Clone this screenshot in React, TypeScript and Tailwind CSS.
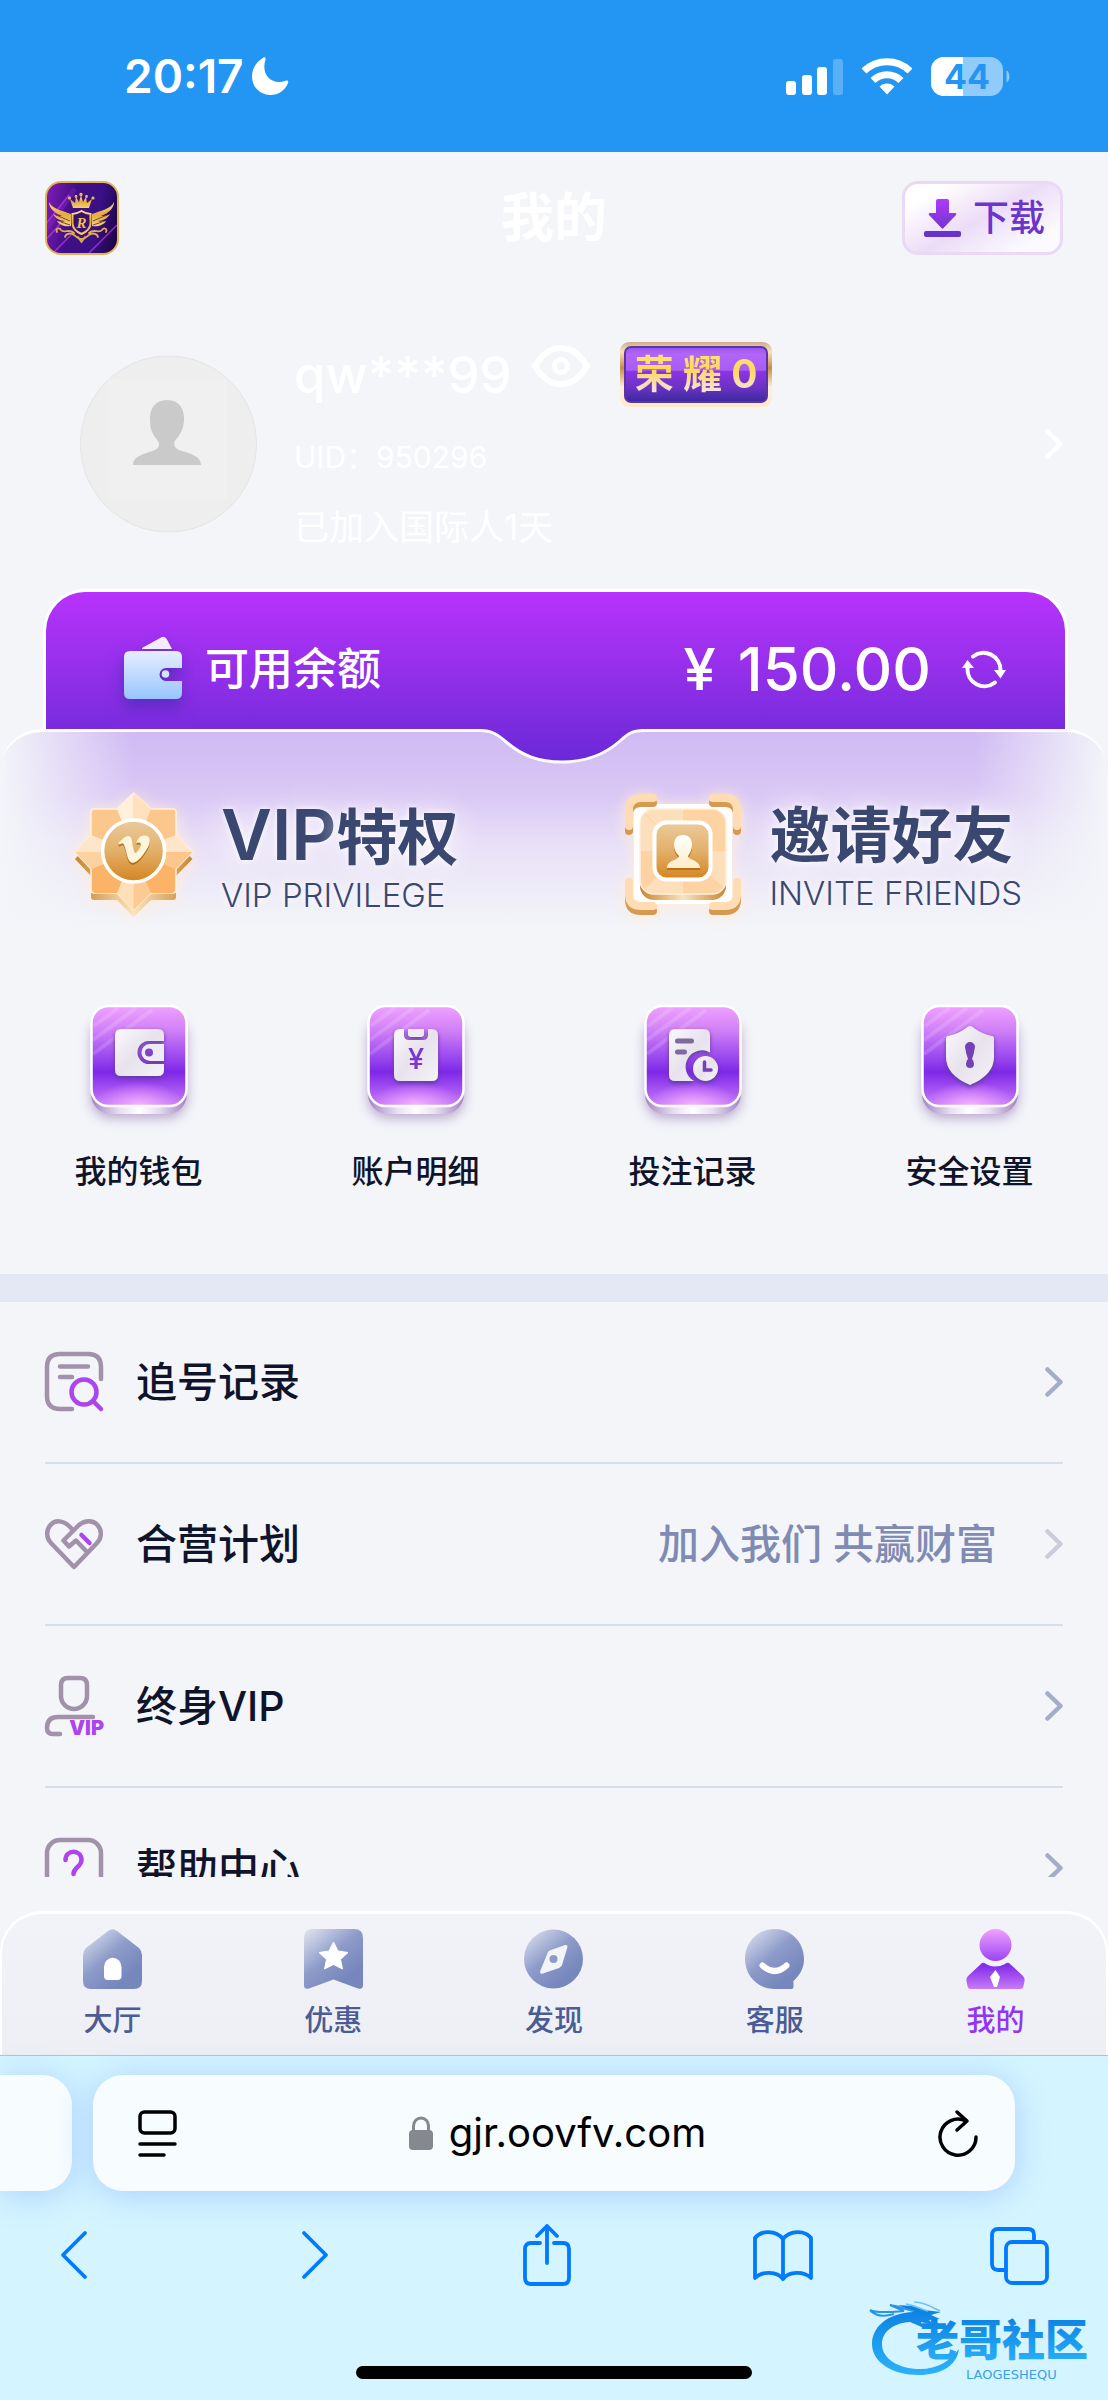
import type { ReactNode } from 'react';
import { FaVimeoV } from 'react-icons/fa';

const QUICK_LINKS = [
  { label: '我的钱包', glyph: <WalletGlyph /> },
  { label: '账户明细', glyph: <BillGlyph /> },
  { label: '投注记录', glyph: <HistoryGlyph /> },
  { label: '安全设置', glyph: <ShieldGlyph /> },
];

const MENU = [
  { label: '追号记录', icon: <TraceIcon /> },
  { label: '合营计划', icon: <PartnerIcon />, note: '加入我们 共赢财富' },
  { label: '终身VIP', icon: <LifeVipIcon /> },
  { label: '帮助中心', icon: <HelpIcon /> },
];

const TABS = [
  { label: '大厅', icon: <HallIcon /> },
  { label: '优惠', icon: <PromoIcon /> },
  { label: '发现', icon: <DiscoverIcon /> },
  { label: '客服', icon: <ServiceIcon /> },
  { label: '我的', icon: <MineIcon />, active: true },
];

// Gradients shared by several icons
function SharedDefs() {
  return (
    <svg width="0" height="0" className="absolute" aria-hidden="true">
      <defs>
        <linearGradient id="gold" x1="0" y1="0" x2="0" y2="1">
          <stop offset="0" stopColor="#fbe08a" />
          <stop offset="0.5" stopColor="#e5ab3c" />
          <stop offset="1" stopColor="#f4cf73" />
        </linearGradient>
        <linearGradient id="bronze" x1="0" y1="0" x2="0" y2="1">
          <stop offset="0" stopColor="#ebcb9d" />
          <stop offset="0.5" stopColor="#e2b069" />
          <stop offset="1" stopColor="#d5831f" />
        </linearGradient>
        <linearGradient id="goldEdge" x1="0" y1="0" x2="1" y2="0">
          <stop offset="0" stopColor="#c98431" />
          <stop offset="0.5" stopColor="#fbe3bd" />
          <stop offset="1" stopColor="#c98431" />
        </linearGradient>
        <linearGradient id="cream" x1="0" y1="0" x2="0" y2="1">
          <stop offset="0" stopColor="#ffffff" />
          <stop offset="1" stopColor="#ffedc8" />
        </linearGradient>
        <linearGradient id="tile" x1="0" y1="0" x2="0" y2="1">
          <stop offset="0" stopColor="#f0a2ff" />
          <stop offset="0.25" stopColor="#cf7ff7" />
          <stop offset="0.55" stopColor="#9340ee" />
          <stop offset="0.66" stopColor="#7d28e6" />
          <stop offset="0.85" stopColor="#a956f3" />
          <stop offset="1" stopColor="#c47cf8" />
        </linearGradient>
        <radialGradient id="tileGlow" cx="0.5" cy="1" r="0.5">
          <stop offset="0" stopColor="#f7b4ff" />
          <stop offset="1" stopColor="#f0a2ff" stopOpacity="0" />
        </radialGradient>
        <linearGradient id="tileBase" x1="0" y1="0" x2="1" y2="0">
          <stop offset="0" stopColor="#a183c4" />
          <stop offset="0.3" stopColor="#e9def2" />
          <stop offset="0.5" stopColor="#ffffff" />
          <stop offset="0.7" stopColor="#e9def2" />
          <stop offset="1" stopColor="#a183c4" />
        </linearGradient>
        <linearGradient id="paper" x1="0" y1="0" x2="1" y2="1">
          <stop offset="0" stopColor="#faf8fc" />
          <stop offset="0.5" stopColor="#e7e2ec" />
          <stop offset="1" stopColor="#f5f2f8" />
        </linearGradient>
        <linearGradient id="tab" x1="0.1" y1="0" x2="0.75" y2="0.8">
          <stop offset="0" stopColor="#dadeed" />
          <stop offset="0.55" stopColor="#8d9bc9" />
          <stop offset="1" stopColor="#7687bd" />
        </linearGradient>
        <linearGradient id="tabHead" x1="0" y1="0" x2="0" y2="1">
          <stop offset="0" stopColor="#f0a2ff" />
          <stop offset="1" stopColor="#9a45f0" />
        </linearGradient>
        <linearGradient id="tabBody" x1="0" y1="0" x2="0" y2="1">
          <stop offset="0.15" stopColor="#8630ea" />
          <stop offset="1" stopColor="#c77af9" />
        </linearGradient>
      </defs>
    </svg>
  );
}

function StatusBar() {
  return (
    <div className="flex h-[152px] shrink-0 items-center justify-between bg-[#2396f4] pr-[97px] pl-[124px] text-white">
      <div className="flex items-center gap-2">
        <span className="text-[46px] leading-none font-semibold">20:17</span>
        <svg width="37" height="38" viewBox="0 0 37 38" fill="currentColor">
          <path d="M11.500 0.500C4 5 0 12 0 19.500 0 30 8 38 18.500 38c8 0 14.500-4.500 17.500-12 .8-2-.6-3-2.500-2.200C20 28.500 8.500 18.500 13.500 2.500c.5-1.800-.5-2.800-2-2z" />
        </svg>
      </div>
      <div className="flex items-center gap-[19px]">
        <svg width="57" height="37" viewBox="0 0 57 37" fill="currentColor">
          <rect x="0" y="23" width="10" height="14" rx="3" />
          <rect x="16" y="17" width="10" height="20" rx="3" />
          <rect x="31" y="9" width="10" height="28" rx="3" />
          <rect x="47" y="1" width="10" height="36" rx="3" opacity="0.25" />
        </svg>
        <svg width="50" height="38" viewBox="0 0 50 38" fill="none" stroke="currentColor" strokeWidth="7">
          <path d="M2 14A33 33 0 0 1 48 14" />
          <path d="M11 23.500A20 20 0 0 1 39 23.500" />
          <path d="M25 37.500l-7.500-8a10.600 10.600 0 0 1 15 0z" fill="currentColor" stroke="none" />
        </svg>
        <svg width="80" height="39" viewBox="0 0 80 39" className="overflow-visible" role="img" aria-label="44%">
          <clipPath id="cell">
            <rect width="72" height="39" rx="13" />
          </clipPath>
          <g clipPath="url(#cell)">
            <rect width="72" height="39" fill="#fff" fillOpacity="0.5" />
            <rect width="32" height="39" fill="#fff" />
          </g>
          <path d="M75.500 13.500c4 2 4 10 0 12z" fill="#fff" fillOpacity="0.5" />
          <text x="36" y="32" textAnchor="middle" fontSize="34" fontWeight="700" fill="#2396f4">44</text>
        </svg>
      </div>
    </div>
  );
}

function AppLogo() {
  return (
    <svg width="74" height="74" viewBox="0 0 74 74">
      <defs>
        <linearGradient id="logoBg" x1="0" y1="0.4" x2="1" y2="0.6">
          <stop offset="0" stopColor="#7a1bb0" />
          <stop offset="0.35" stopColor="#3f0f86" />
          <stop offset="0.7" stopColor="#391085" />
          <stop offset="1" stopColor="#1e0546" />
        </linearGradient>
        <clipPath id="logoClip">
          <rect x="1" y="1" width="72" height="72" rx="15" />
        </clipPath>
      </defs>
      <g clipPath="url(#logoClip)">
        <rect width="74" height="74" fill="url(#logoBg)" />
        <path d="M0 44L24 14M-2 62L16 42M44 72L72 44M8 72L26 54" stroke="#c53df0" strokeWidth="1.500" opacity="0.7" />
        <path d="M0 50L30 8" stroke="#b22bea" strokeWidth="5" opacity="0.25" />
      </g>
      <rect x="1" y="1" width="72" height="72" rx="15" fill="none" stroke="#e3b356" strokeWidth="2" />
      <g fill="url(#gold)">
        <path d="M28 27l-3-9 5 4 1-6 3 5 2-7 2 7 3-5 1 6 5-4-3 9z" />
        <circle cx="24.500" cy="17" r="1.600" />
        <circle cx="31" cy="15.500" r="1.400" />
        <circle cx="36" cy="13.500" r="1.700" />
        <circle cx="41.500" cy="15.500" r="1.400" />
        <circle cx="48" cy="17" r="1.600" />
        <path d="M4 21c3 7 14 9 22 12v12c-6 1-12-1-14-5 3 1 6 1 8 0-5 0-10-3-12-7 3 2 7 2 9 2C9 32 4 27 4 21z" />
        <path d="M69 21c-3 7-14 9-22 12v12c6 1 12-1 14-5-3 1-6 1-8 0 5 0 10-3 12-7-3 2-7 2-9 2 8-3 13-8 13-14z" />
      </g>
      <path d="M11 34l14 6M16 41l9 3M62 34l-14 6M57 41l-9 3" stroke="#5a2a3c" strokeWidth="0.800" />
      <path d="M27.500 33q4 0 9-3 5 3 9 3v9q0 7-9 11-9-4-9-11z" fill="#3a0f6d" stroke="url(#gold)" strokeWidth="2" />
      <text x="36.500" y="47" textAnchor="middle" fontSize="15" fontStyle="italic" fontWeight="700" fill="#edc05c" className="font-['Liberation_Serif',serif]">R</text>
      <g fill="none" stroke="#e0ad4b" strokeWidth="1.800" strokeLinecap="round">
        <path d="M12 51c-2-3 2-5 4-2 3 4 8-2 13 3M20 56c1-4 6-4 9-2s4 4 7 4M61 51c2-3-2-5-4-2-3 4-8-2-13 3M53 56c-1-4-6-4-9-2s-4 4-7 4" />
        <path d="M33 56l3.500 5 3.500-5" />
      </g>
    </svg>
  );
}

function PageHeader() {
  return (
    <header className="grid grid-cols-[1fr_auto_1fr] items-center px-[45px] pt-[29px]">
      <a href="#home" aria-label="首页" className="justify-self-start">
        <AppLogo />
      </a>
      <h1 className="text-[53px] leading-none font-bold text-white">我的</h1>
      <button className="flex h-[74px] items-center gap-3 justify-self-end rounded-[16px] border-[3px] border-[#e9d8f6] bg-[linear-gradient(150deg,#ffffff_15%,#ecdcf7_50%,#fbfbff_85%)] pr-[15px] pl-[19px] text-[#6b35cc]">
        <svg width="37" height="38" viewBox="0 0 37 38">
          <defs>
            <linearGradient id="dl" x1="0" y1="0" x2="0" y2="1">
              <stop offset="0" stopColor="#ad3cf8" />
              <stop offset="1" stopColor="#6f35d0" />
            </linearGradient>
          </defs>
          <path d="M14 0h9q2 0 2 2v12h6q2 0 1 2L19.500 29q-1 1.500-2 0L5 16q-1-2 1-2h6V2q0-2 2-2z" fill="url(#dl)" />
          <rect x="0" y="32" width="37" height="6" rx="2" fill="#6634c8" />
        </svg>
        <span className="text-[36px] leading-none font-medium">下载</span>
      </button>
    </header>
  );
}

function Profile() {
  return (
    <section className="mt-[86px] flex items-center pr-[45px] pl-[80px] text-white">
      <svg width="177" height="178" viewBox="0 0 177 178" className="shrink-0">
        <circle cx="88.500" cy="89" r="88" fill="#eeeeee" stroke="#e4e4e4" />
        <rect x="28" y="24" width="119" height="120" fill="#f0f0f0" />
        <path d="M87 45c12 0 18 9 17 21-1 10-5 15-9 20-2 4 0 7 4 9 12 4 22 6 22 15H53c0-9 11-11 22-15 4-2 5-5 3-9-4-5-8-10-8-20-1-12 5-21 17-21z" fill="#cacaca" />
      </svg>
      <div className="ml-[37px] flex-1">
        <div className="flex h-[66px] items-center">
          <span className="text-[51px] leading-none font-medium">qw***99</span>
          <button aria-label="隐藏" className="mb-4 ml-5">
            <svg width="58" height="42" viewBox="0 0 58 42" fill="none" stroke="currentColor" strokeWidth="6">
              <path d="M3 21C10 9 18 3 29 3s19 6 26 18c-7 12-15 18-26 18S10 33 3 21z" />
              <circle cx="29" cy="21" r="6.500" strokeWidth="5" />
            </svg>
          </button>
          <span className="ml-[30px] rounded-[9px] bg-[linear-gradient(180deg,#cdb08a,#f6e0bd_15%,#c78f45_40%,#fdf0dc_70%,#ffe9c6)] p-1">
            <span className="flex h-[57px] items-center rounded-[7px] border-2 border-[#5a35a8] bg-[linear-gradient(180deg,#9a55ec,#b365fa_12%,#a85cf4_42%,#8b35e2_44%,#6b32c4_75%,#3b2a9e)] px-[9px]">
              <span className="bg-[linear-gradient(180deg,#ffe97a,#ffd75a_40%,#f3e3d8_85%)] bg-clip-text text-[39px] leading-[48px] font-bold whitespace-nowrap text-transparent">荣 耀 0</span>
            </span>
          </span>
        </div>
        <p className="mt-[30px] text-[30px] leading-10">UID：950296</p>
        <p className="mt-[30px] text-[35px] leading-10">已加入国际人1天</p>
      </div>
      <Chevron className="text-white" />
    </section>
  );
}

function Chevron({ className }: { className: string }) {
  return (
    <svg width="18" height="30" viewBox="0 0 18 30" className={className} fill="none" stroke="currentColor" strokeWidth="4.500" strokeLinecap="round" strokeLinejoin="round">
      <path d="M2.500 2.500L15.500 15 2.500 27.500" />
    </svg>
  );
}

function BalanceCard() {
  return (
    <section className="mt-[42px] mr-[40px] ml-[43px] flex h-[140px] items-center justify-between rounded-t-[42px] border-[3px] border-b-0 border-white bg-linear-to-b from-[#b832fb] to-[#792bde] pt-4 pr-[58px] pl-[77px] text-white">
      <div className="flex items-center gap-[22px]">
        <svg width="60" height="66" viewBox="0 0 60 66" className="drop-shadow-[0_8px_8px_#5a2bc0]">
          <defs>
            <linearGradient id="purse" x1="0" y1="0" x2="0" y2="1">
              <stop offset="0" stopColor="#e6eeff" />
              <stop offset="1" stopColor="#98c5ff" />
            </linearGradient>
          </defs>
          <path d="M19 12L38 1.500q4-2 6 2L49 13H19z" fill="#f3ecff" />
          <path d="M7 15h46q6 0 6 6v11H43a6.500 6.500 0 0 0 0 13h16v12q0 6-6 6H7q-6 0-6-6V21q0-6 6-6z" fill="url(#purse)" />
          <circle cx="42.500" cy="38" r="3.800" fill="#d4e4ff" />
        </svg>
        <span className="text-[44px] leading-none font-medium">可用余额</span>
      </div>
      <div className="flex items-center">
        <span className="text-[58px] leading-none font-medium">¥</span>
        <span className="ml-[22px] text-[60px] leading-none font-medium">150.00</span>
        <button aria-label="刷新" className="ml-[30px]">
          <svg width="46" height="40" viewBox="0 0 46 40" fill="none" stroke="currentColor" strokeWidth="4" strokeLinecap="round">
            <path d="M12 7.500A17 17 0 0 1 39.500 21" />
            <path d="M34 33.500A17 17 0 0 1 6.500 19" />
            <path d="M33 21h12l-5.500 8.500zM1 19h12L6.500 11z" fill="currentColor" stroke="none" />
          </svg>
        </button>
      </div>
    </section>
  );
}

function VipBadge() {
  const star =
    'M58.600 1L76 17h22q3 0 3 3v23l16.500 17L101 77v21q0 3-3 3H76l-17.400 17L42 101H19q-3 0-3-3V77L0 60l16-17V20q0-3 3-3h23z';
  return (
    <svg width="120" height="126" viewBox="0 0 120 126" className="shrink-0 overflow-visible drop-shadow-[0_2px_8px_#ffeeda]">
      <path d={star} fill="url(#goldEdge)" transform="translate(0 7)" />
      <path d={star} fill="#fcc78c" stroke="#fff1df" strokeWidth="1.500" />
      <g>
        <path d="M58.600 1L76 17 58.600 59z" fill="#ffe2bd" />
        <path d="M58.600 1L42 17l16.600 42z" fill="#fff0da" />
        <path d="M101 43l16.500 17H58.600z" fill="#ffe6cb" />
        <path d="M101 77l16.500-17H58.600z" fill="#fdc68b" />
        <path d="M16 43L0 60h58.600z" fill="#ffe6cb" />
        <path d="M16 77L0 60h58.600z" fill="#fdd2a1" />
        <path d="M58.600 118L76 101 58.600 59z" fill="#fdc994" />
        <path d="M58.600 118L42 101l16.600-42z" fill="#ffdfb8" />
        <path d="M17 98V77l41.600-17L42 101H19z" fill="#fbb368" />
        <path d="M100 98V77L58.600 60 76 101h22z" fill="#fbb368" />
      </g>
      <circle cx="58.600" cy="59" r="31" fill="url(#bronze)" stroke="#fff" strokeWidth="3.500" />
      <FaVimeoV x="41" y="41" size={36} color="#b5701a" />
      <FaVimeoV x="41" y="39" size={36} color="#fff4dc" />
    </svg>
  );
}

function InviteBadge() {
  const brackets = 'M6 34V18Q6 6 18 6h12M90 6h12q12 0 12 12v16M6 90v12q0 12 12 12h12M90 114h12q12 0 12-12V90';
  return (
    <svg width="120" height="126" viewBox="0 0 120 126" className="shrink-0 overflow-visible drop-shadow-[0_2px_8px_#ffeeda]">
      <rect x="11" y="12" width="98" height="100" rx="6" fill="#fff" />
      <g fill="none" strokeWidth="8" strokeLinecap="round">
        <path d={brackets} stroke="#d59a50" transform="translate(0 5)" />
        <path d={brackets} stroke="#ffdcb4" />
      </g>
      <rect x="17" y="22" width="86" height="86" rx="14" fill="url(#goldEdge)" />
      <rect x="17" y="17" width="86" height="85" rx="14" fill="#fdd3a3" stroke="#fff1df" strokeWidth="1.500" />
      <path d="M60 59V17H31q-6 0-9 4zM60 59h42V87q0 5-2 8zM60 59v43H31q-6 0-9-5zM60 59H18V31q0-5 3-9z" fill="#ffe8cd" opacity="0.6" />
      <rect x="31.500" y="30.500" width="56" height="57" rx="12" fill="url(#bronze)" stroke="#fff" strokeWidth="4" />
      <path d="M60 43c6 0 9 4 9 10 0 5-2 8-4 11 0 4 12 4 12 12H44c0-8 12-8 12-12-3-3-5-6-5-11 0-6 3-10 9-10z" fill="#b96f17" transform="translate(0 2)" />
      <path d="M60 43c6 0 9 4 9 10 0 5-2 8-4 11 0 4 12 4 12 12H44c0-8 12-8 12-12-3-3-5-6-5-11 0-6 3-10 9-10z" fill="url(#cream)" />
    </svg>
  );
}

function FeatureLink({ icon, title, sub }: { icon: ReactNode; title: ReactNode; sub: string }) {
  return (
    <a href="#feature" className="flex items-center gap-[26px] pl-[75px] text-[#394771]">
      {icon}
      <span className="flex flex-col whitespace-nowrap [text-shadow:0_0_6px_#fff,0_0_30px_#fff]">
        <span className="text-[61px] leading-[76px] font-bold">{title}</span>
        <span className="text-[33px] leading-[38px] font-light">{sub}</span>
      </span>
    </a>
  );
}

function Tile({ children }: { children: ReactNode }) {
  return (
    <svg width="110" height="130" viewBox="0 0 110 130" className="overflow-visible">
      <g className="drop-shadow-[0_4px_6px_#b9a6cc]">
        <rect x="7" y="16" width="96" height="100" rx="20" fill="url(#tileBase)" />
      </g>
      <rect x="7.500" y="8" width="95" height="100" rx="17" fill="url(#tile)" />
      <rect x="7.500" y="60" width="95" height="48" rx="17" fill="url(#tileGlow)" />
      <path d="M10 28L34 10M9 42L52 10M9 56L68 12" stroke="#ffffff" strokeWidth="4" opacity="0.14" />
      <rect x="7.500" y="8" width="95" height="100" rx="17" fill="none" stroke="#fff" strokeWidth="2.500" />
      <g className="drop-shadow-[0_2px_2px_#5c3f97]">{children}</g>
    </svg>
  );
}

function WalletGlyph() {
  return (
    <Tile>
      <path d="M37 31h37q6 0 6 6v6H65a11 11 0 0 0 0 23h15v6q0 6-6 6H37q-6 0-6-6V37q0-6 6-6z" fill="url(#paper)" />
      <path d="M80 46H66a8 8 0 0 0 0 17h14z" fill="#efeaf4" />
      <circle cx="65" cy="54.500" r="4" fill="#7b45c4" />
    </Tile>
  );
}

function BillGlyph() {
  return (
    <Tile>
      <path d="M39 31h4v6q0 5 5 5h14q5 0 5-5v-6h4q6 0 6 6v40q0 6-6 6H39q-6 0-6-6V37q0-6 6-6z" fill="url(#paper)" />
      <path d="M47 31h16v5q0 3-3 3H50q-3 0-3-3z" fill="#efeaf4" />
      <text x="55" y="71" textAnchor="middle" fontSize="29" fontWeight="500" fill="#7b35d4">¥</text>
    </Tile>
  );
}

function HistoryGlyph() {
  return (
    <Tile>
      <path d="M37 31h29q6 0 6 6v17.500A16 16 0 0 0 56 83H37q-6 0-6-6V37q0-6 6-6z" fill="url(#paper)" />
      <path d="M39.500 43h14M39.500 54h7" stroke="#7f6a9f" strokeWidth="5" strokeLinecap="round" />
      <circle cx="67.500" cy="70.500" r="12.500" fill="url(#paper)" />
      <path d="M66.500 64v8H73" fill="none" stroke="#7540c0" strokeWidth="3.500" strokeLinecap="round" />
    </Tile>
  );
}

function ShieldGlyph() {
  return (
    <Tile>
      <path d="M55 28q2 0 4 2 8 6 18 8 2 0 2 3v18q0 18-24 28Q31 77 31 59V41q0-3 2-3 10-2 18-8 2-2 4-2z" fill="url(#paper)" />
      <path d="M50 49a5 5 0 0 1 10 0q-1 7-3 12 2 2 2 5a4 4 0 0 1-8 0q0-3 2-5-2-5-3-12z" fill="#7440b8" />
    </Tile>
  );
}

function MemberPanel() {
  return (
    <section className="relative rounded-t-[42px] border-t-[3px] border-white bg-[linear-gradient(90deg,#f3f5f9,#f3f5f900_12%,#f3f5f900_88%,#f3f5f9),linear-gradient(180deg,#d0baf3,#dac8f5_12%,#e8dff7_20%,#f3f5f9_36%)] pt-[60px] pb-[82px]">
      {/* Dip in the top edge where the balance card shows through */}
      <svg width="180" height="38" viewBox="0 0 180 38" className="absolute -top-[3px] left-1/2 -translate-x-1/2">
        <defs>
          <linearGradient id="dip" x1="0" y1="0" x2="0" y2="1">
            <stop offset="0" stopColor="#792bde" />
            <stop offset="1" stopColor="#6a28d8" />
          </linearGradient>
        </defs>
        <path d="M16 0v1.500C28 1.500 34 6 41 12c17 15 34 21 57 21s41-6 58-21c7-6 11-10.500 23-10.500V0z" fill="url(#dip)" />
        <path d="M16 1.500C28 1.500 34 6 41 12c17 15 34 21 57 21s41-6 58-21c7-6 11-10.500 23-10.500" fill="none" stroke="#fff" strokeWidth="3" />
      </svg>
      <div className="grid grid-cols-[49fr_50fr]">
        <FeatureLink
          icon={<VipBadge />}
          title={<><span className="text-[70px] font-semibold">VIP</span>特权</>}
          sub="VIP PRIVILEGE"
        />
        <FeatureLink icon={<InviteBadge />} title="邀请好友" sub="INVITE FRIENDS" />
      </div>
      <nav className="mt-20 grid grid-cols-4">
        {QUICK_LINKS.map((item) => (
          <a key={item.label} href="#quick" className="flex flex-col items-center gap-6 text-[#10142b]">
            {item.glyph}
            <span className="text-[32px] leading-10 font-medium">{item.label}</span>
          </a>
        ))}
      </nav>
    </section>
  );
}

function LineIcon({ children }: { children: ReactNode }) {
  return (
    <svg width="58" height="60" viewBox="0 0 58 60" className="shrink-0 overflow-visible" fill="none" stroke="#a191ab" strokeWidth="4.500" strokeLinecap="round" strokeLinejoin="round">
      {children}
    </svg>
  );
}

function TraceIcon() {
  return (
    <LineIcon>
      <path d="M56 27V15Q56 2 43 2H15Q2 2 2 15v29q0 13 13 13h12" />
      <path d="M15 14.500h28M15 25h12" />
      <g stroke="#ab45ee">
        <circle cx="39" cy="40" r="12.500" />
        <path d="M48 49l8 8" />
      </g>
    </LineIcon>
  );
}

function PartnerIcon() {
  return (
    <LineIcon>
      <path d="M28 16l-4-4C18 6 10 6 5.500 11S1 24 6 29l23 24 23-24c5-5 5-13 .5-18S40 6 34 11L18.500 26.500l5.500 6 7-6L42 38" />
      <path d="M36.500 21l8 8" stroke="#ab45ee" />
    </LineIcon>
  );
}

function LifeVipIcon() {
  return (
    <LineIcon>
      <path d="M23 2h12q7 0 7 7v11a13 13 0 0 1-26 0V9q0-7 7-7z" />
      <path d="M48 41H13Q2 41 2 52q0 6 6 6h7" />
      <text x="59" y="59" textAnchor="end" fontSize="20" fontWeight="900" fill="#ab45ee" stroke="none">VIP</text>
    </LineIcon>
  );
}

function HelpIcon() {
  return (
    <LineIcon>
      <rect x="2" y="2" width="54" height="55" rx="13" />
      <path d="M20.500 22c0-11 16-11 16 0 0 7-8 7-8 14M28.500 44v1" stroke="#ab45ee" />
    </LineIcon>
  );
}

function MenuList() {
  return (
    <ul className="min-h-0 flex-1 overflow-hidden px-[45px]">
      {MENU.map((item) => (
        <li key={item.label} className="border-b-2 border-[#d7deeb]">
          <a href="#menu" className="flex h-[160px] items-center text-[41px] leading-none font-medium">
            {item.icon}
            <span className="ml-[33px] flex-1 text-[#10142b]">{item.label}</span>
            {item.note && <span className="mr-12 text-[#7f8bb2]">{item.note}</span>}
            <Chevron className={item.note ? 'text-[#cbcbd9]' : 'text-[#a3acc9]'} />
          </a>
        </li>
      ))}
    </ul>
  );
}

function HallIcon() {
  return (
    <svg width="59" height="60" viewBox="0 0 59 60">
      <path d="M25 2q4.500-3.500 9 0l22 17q3 3 3 7v26q0 8-8 8H8q-8 0-8-8V26q0-4 3-7z" fill="url(#tab)" />
      <path d="M21 38a8.500 9 0 0 1 17.500 0v9q0 4-4 4H25q-4 0-4-4z" fill="#fff" />
    </svg>
  );
}

function PromoIcon() {
  return (
    <svg width="59" height="60" viewBox="0 0 59 60">
      <path d="M9 0h41q9 0 9 9v47q0 5-5 3.500L29.500 50.500 5 59.500Q0 61 0 56V9q0-9 9-9z" fill="url(#tab)" />
      <path d="M29.500 13l4.500 9 10 1.500-7.500 7 2 9.500-9-4.500-9 4.500 2-9.500L15 23.500 25 22z" fill="#fff" stroke="#fff" strokeWidth="1" strokeLinejoin="round" />
    </svg>
  );
}

function DiscoverIcon() {
  return (
    <svg width="59" height="60" viewBox="0 0 59 60">
      <circle cx="29.500" cy="30" r="29.500" fill="url(#tab)" />
      <path d="M24 23q1-1.500 3-2l14-5q3-.5 2.500 2L38 36q-1 2-3 3l-16 5.500q-3 1-3-2z" fill="#f3f4f8" />
      <circle cx="29.500" cy="30" r="4" fill="#8d9bc9" />
    </svg>
  );
}

function ServiceIcon() {
  return (
    <svg width="59" height="60" viewBox="0 0 59 60">
      <path d="M29.500 0C46 0 59 13 59 30c0 9-4 16-10.500 22v6q0 2-2 2h-17C13 60 0 47 0 30S13 0 29.500 0z" fill="url(#tab)" />
      <path d="M17.500 36.500q12 11 24 0" fill="none" stroke="#fff" strokeWidth="6" strokeLinecap="round" />
    </svg>
  );
}

function MineIcon() {
  return (
    <svg width="59" height="60" viewBox="0 0 59 60">
      <circle cx="29.500" cy="16" r="16" fill="url(#tabHead)" />
      <path d="M16 34q2-1 4 1 9 5 19 0 2-2 4-1l14 13q2 2 1.500 5l-1 5q-.5 3-3 3H4.500q-2.500 0-3-3l-1-5Q0 49 2 47z" fill="url(#tabBody)" />
      <path d="M29.500 41l4.500 7-3 10h-3l-4-10z" fill="#fff" />
    </svg>
  );
}

function TabBar() {
  return (
    <nav className="mt-[34px] grid shrink-0 grid-cols-5 rounded-t-[42px] border-x-2 border-t-[3px] border-white bg-linear-to-b from-[#f2f3f8] to-[#eeeff4] pt-[15px] pb-4">
      {TABS.map((tab) => (
        <a key={tab.label} href="#tab" className={`flex flex-col items-center gap-[14px] ${tab.active ? 'text-[#8f35f5]' : 'text-[#4b5b94]'}`}>
          {tab.icon}
          <span className="text-[29px] leading-9 font-medium">{tab.label}</span>
        </a>
      ))}
    </nav>
  );
}

function BrowserBar() {
  return (
    <footer className="relative shrink-0 border-t border-[#a9c4d9] bg-[#d4f5ff] pt-[19px] pb-[21px]">
      <div className="flex h-[116px] gap-[21px] pr-[93px]">
        <div className="w-[72px] rounded-r-[30px] bg-[#f7fcff] shadow-[0_4px_36px_#aacfff]" />
        <div className="flex flex-1 items-center justify-between rounded-[30px] bg-[#f7fcff] pr-[37px] pl-[45px] text-black shadow-[0_4px_36px_#aacfff]">
          <button aria-label="页面菜单">
            <svg width="39" height="47" viewBox="0 0 39 47" fill="none" stroke="currentColor" strokeWidth="3.500" strokeLinecap="round">
              <rect x="2" y="2" width="35" height="21" rx="4.500" />
              <path d="M2 34h35M2 45h24" />
            </svg>
          </button>
          <button className="flex items-center gap-4 text-[40px] leading-none">
            <svg width="24" height="34" viewBox="0 0 24 34">
              <rect x="0" y="14" width="24" height="20" rx="4" fill="#86888f" />
              <path d="M4.500 15V10a7.500 8 0 0 1 15 0v5" fill="none" stroke="#86888f" strokeWidth="3" />
            </svg>
            gjr.oovfv.com
          </button>
          <button aria-label="刷新页面">
            <svg width="40" height="48" viewBox="0 0 40 48" fill="none" stroke="currentColor" strokeWidth="3.500" strokeLinecap="round" strokeLinejoin="round">
              <path d="M38 28A18 18 0 1 1 28 12" />
              <path d="M19 3l10 9-10 9" />
            </svg>
          </button>
        </div>
      </div>
      <div className="mt-[33px] flex justify-between pr-[59px] pl-[45px]">
        <ToolButton label="后退">
          <path d="M40 9L18 31l22 22" />
        </ToolButton>
        <ToolButton label="前进">
          <path d="M23 9l22 22-22 22" />
        </ToolButton>
        <ToolButton label="分享">
          <path d="M23 19h-9q-6 0-6 6v29q0 6 6 6h32q6 0 6-6V25q0-6-6-6h-9" />
          <path d="M30 39V2M20 12L30 2l10 10" />
        </ToolButton>
        <ToolButton label="书签">
          <path d="M30 15C23 6 8 6 2 14v40c7-7 22-7 28 1 6-8 21-8 28-1V14C52 6 37 6 30 15v40" />
        </ToolButton>
        <ToolButton label="标签页">
          <rect x="17" y="18" width="41" height="41" rx="6" />
          <path d="M17 46h-8q-6 0-6-6V11q0-6 6-6h30q6 0 6 6v7" />
        </ToolButton>
      </div>
      <div className="mx-auto mt-[80px] h-[13px] w-[396px] rounded-full bg-black" />
      <Watermark />
    </footer>
  );
}

function ToolButton({ label, children }: { label: string; children: ReactNode }) {
  return (
    <button aria-label={label} className="text-[#007aff]">
      <svg width="60" height="62" viewBox="0 0 60 62" fill="none" stroke="currentColor" strokeWidth="3.800" strokeLinecap="round" strokeLinejoin="round">
        {children}
      </svg>
    </button>
  );
}

function Watermark() {
  return (
    <svg width="228" height="80" viewBox="0 0 228 80" className="absolute right-3 bottom-[20px] overflow-visible">
      <defs>
        <linearGradient id="wave" x1="0" y1="0" x2="0" y2="1">
          <stop offset="0" stopColor="#0b7fe0" />
          <stop offset="1" stopColor="#2bb2fb" />
        </linearGradient>
      </defs>
      <path d="M46 12C18 13 4 28 4 44c0 18 20 31 47 31 21 0 38-9 40-26-9 12-21 20-39 20-21 0-38-10-38-25 0-12 11-21 28-22l14 6-3-6 13 3-5-5 11-1-9-4 10-3-17-2-12-4-14-1z" fill="url(#wave)" />
      <path d="M2 10c6 3 14 2 22 2l12-1-14-6c8 1 17 5 24 6M2 10c5 6 14 7 24 4" fill="none" stroke="#2b93e8" strokeWidth="2" />
      <path d="M38 4c8 1 14 5 22 7M46 2c10 0 18 5 26 9" fill="none" stroke="#6fc0f4" strokeWidth="1.500" />
      <text x="48" y="56" fontSize="43" fontWeight="900" fill="url(#wave)">老哥社区</text>
      <text x="98" y="79" fontSize="13" fill="#3a9fec" className="font-['DejaVu_Sans',sans-serif]">LAOGESHEQU</text>
    </svg>
  );
}

export default function App() {
  return (
    <div className="flex h-screen flex-col overflow-hidden bg-[#f3f5f9] font-['Inter','Noto_Sans_CJK_SC',sans-serif]">
      <SharedDefs />
      <StatusBar />
      <main className="flex min-h-0 flex-1 flex-col">
        <PageHeader />
        <Profile />
        <BalanceCard />
        <MemberPanel />
        <div className="h-7 shrink-0 bg-[#e4e8f4]" />
        <MenuList />
      </main>
      <TabBar />
      <BrowserBar />
    </div>
  );
}
